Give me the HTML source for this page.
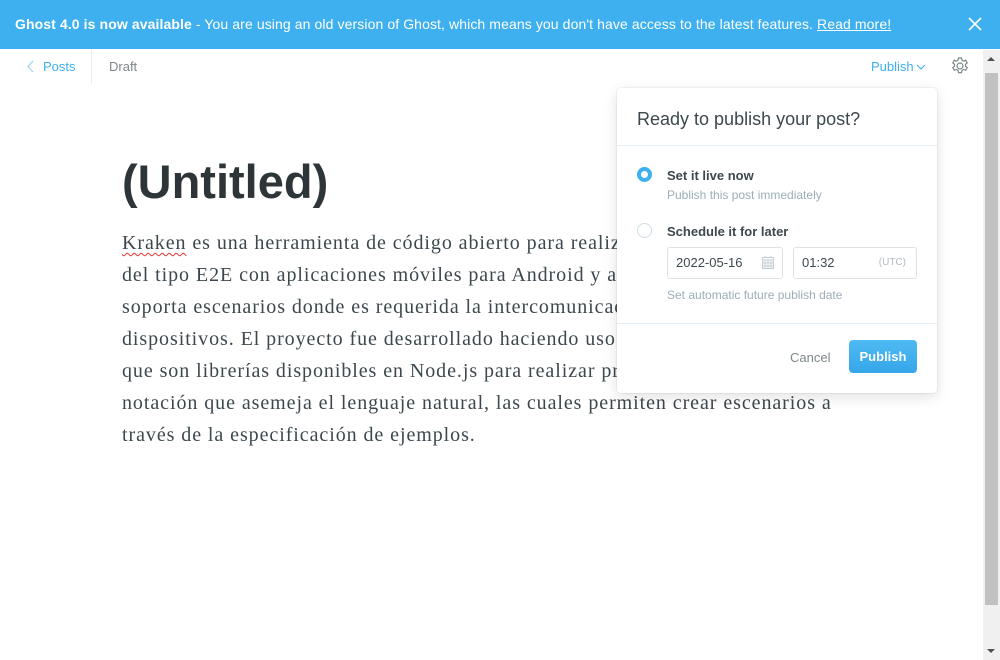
<!DOCTYPE html>
<html><head><meta charset="utf-8"><style>
*{box-sizing:border-box;margin:0;padding:0}
body{width:1000px;height:660px;overflow:hidden;background:#fff;font-family:"Liberation Sans",sans-serif;position:relative}
.banner{position:absolute;left:0;top:0;width:1000px;height:49px;background:#3eb0ef;color:#fff;font-size:14px;line-height:49px;padding-left:15px;white-space:nowrap;letter-spacing:0.1px}
.banner b{font-weight:bold}
.banner u{text-decoration:underline}
.close{position:absolute;right:18px;top:17px;width:14px;height:14px}
.posts{position:absolute;left:27px;color:#3eb0ef;top:50px;font-size:13px;line-height:34px}
.sep{position:absolute;left:91px;top:50px;width:1px;height:34px;background:#e5eff5}
.draft{position:absolute;left:109px;top:50px;color:#7d878a;font-size:13px;line-height:34px}
.pubtop{position:absolute;left:871px;top:50px;color:#3eb0ef;font-size:13px;line-height:34px}
.sb{position:absolute;left:983px;top:50px;width:17px;height:610px;background:#f0f0f0}
.thumb{position:absolute;left:985px;top:73px;width:13px;height:532px;background:#c1c1c1}
h1{position:absolute;left:122px;top:152px;font-size:47px;font-weight:bold;color:#2e3539;letter-spacing:0px;line-height:60px}
.body{position:absolute;left:122px;top:227px;font-family:"Liberation Serif",serif;font-size:20px;letter-spacing:0.93px;line-height:32px;color:#3c484e;white-space:nowrap}
.kr{text-decoration:underline wavy #e33;text-underline-offset:3px;text-decoration-thickness:1px}
.pop{position:absolute;left:617px;top:88px;width:320px;height:305px;background:#fff;border-radius:4px;box-shadow:0 0 0 1px rgba(0,0,0,.04),0 4px 14px rgba(0,0,0,.12)}
.ph{height:58px;border-bottom:1px solid #e5eff5;padding-left:20px;font-size:18px;line-height:62px;color:#3c484e}
.opt{position:absolute;left:50px;font-size:13px;font-weight:bold;color:#3c484e}
.sub{position:absolute;left:50px;font-size:12px;color:#9baeb8}
.radio{position:absolute;left:20px;width:15px;height:15px;border-radius:50%}
.inp{position:absolute;top:159px;height:32px;border:1px solid #dfe1e3;border-radius:3px;font-size:13px;color:#3c484e;line-height:30px;padding-left:8px}
.pf{position:absolute;left:0;top:235px;width:320px;border-top:1px solid #e5eff5}
.cancel{position:absolute;left:173px;top:262px;font-size:13px;color:#7d878a}
.btn{position:absolute;left:232px;top:252px;width:68px;height:33px;border-radius:4px;background:linear-gradient(#4fbaf3,#35a6ea);color:#fff;font-size:13px;font-weight:bold;text-align:center;line-height:33px}
</style></head><body>
<div class="banner"><b>Ghost 4.0 is now available</b> - You are using an old version of Ghost, which means you don't have access to the latest features. <u>Read more!</u></div>
<svg class="close" viewBox="0 0 14 14"><path d="M1 1L13 13M13 1L1 13" stroke="#fff" stroke-width="1.6"/></svg>
<svg style="position:absolute;left:27px;top:60px" width="8" height="13" viewBox="0 0 8 13"><path d="M6 1L1 6.5L6 12" stroke="#9dd3f5" stroke-width="1.2" fill="none"/></svg>
<div class="posts" style="left:43px">Posts</div>
<div class="sep"></div>
<div class="draft">Draft</div>
<div class="pubtop">Publish</div>
<svg style="position:absolute;left:916px;top:64px" width="10" height="7" viewBox="0 0 10 7"><path d="M1 1L5 5L9 1" stroke="#3eb0ef" stroke-width="1.1" fill="none"/></svg>
<svg style="position:absolute;left:950px;top:56px" width="20" height="20" viewBox="0 0 20 20"><g stroke="#7d878a" stroke-width="1.2" fill="none"><circle cx="10" cy="10" r="3"/><path d="M8.5 2h3l.5 2.2 1.6.9 2.1-.8 1.5 2.6-1.7 1.5v1.8l1.7 1.5-1.5 2.6-2.1-.8-1.6.9-.5 2.2h-3l-.5-2.2-1.6-.9-2.1.8-1.5-2.6 1.7-1.5V8.4L2.8 6.9l1.5-2.6 2.1.8 1.6-.9z"/></g></svg>
<div class="sb"></div><div class="thumb"></div>
<svg style="position:absolute;left:986px;top:56px" width="10" height="6"><path d="M1 5L5 1L9 5z" fill="#505050"/></svg>
<svg style="position:absolute;left:986px;top:648px" width="10" height="6"><path d="M1 1L5 5L9 1z" fill="#505050"/></svg>
<h1>(Untitled)</h1>
<div class="body"><span class="kr">Kraken</span> es una herramienta de código abierto para realizar pruebas<br>del tipo E2E con aplicaciones móviles para Android y aplicaciones web,<br>soporta escenarios donde es requerida la intercomunicación entre<br>dispositivos. El proyecto fue desarrollado haciendo uso de Cucumber<br>que son librerías disponibles en Node.js para realizar pruebas con una<br>notación que asemeja el lenguaje natural, las cuales permiten crear escenarios a<br>través de la especificación de ejemplos.</div>
<div class="pop">
<div class="ph">Ready to publish your post?</div>
<div class="radio" style="top:79px;border:4px solid #3eb0ef;background:#fff"></div>
<div class="opt" style="top:80px">Set it live now</div>
<div class="sub" style="top:100px">Publish this post immediately</div>
<div class="radio" style="top:135px;border:1px solid #cfdde6"></div>
<div class="opt" style="top:136px">Schedule it for later</div>
<div class="inp" style="left:50px;width:116px">2022-05-16<svg style="position:absolute;right:8px;top:8px" width="12" height="13" viewBox="0 0 12 13"><path d="M0.5 1.5h11v11h-11zM0.5 4h11M3 4v8.5M6 4v8.5M9 4v8.5M0.5 7h11M0.5 10h11M3 0v2M9 0v2" stroke="#c5ced3" fill="none"/></svg></div>
<div class="inp" style="left:176px;width:124px">01:32<span style="position:absolute;right:10px;font-size:10px;color:#b0bbc1">(UTC)</span></div>
<div class="sub" style="top:200px">Set automatic future publish date</div>
<div class="pf"></div>
<div class="cancel">Cancel</div>
<div class="btn">Publish</div>
</div>
</body></html>
